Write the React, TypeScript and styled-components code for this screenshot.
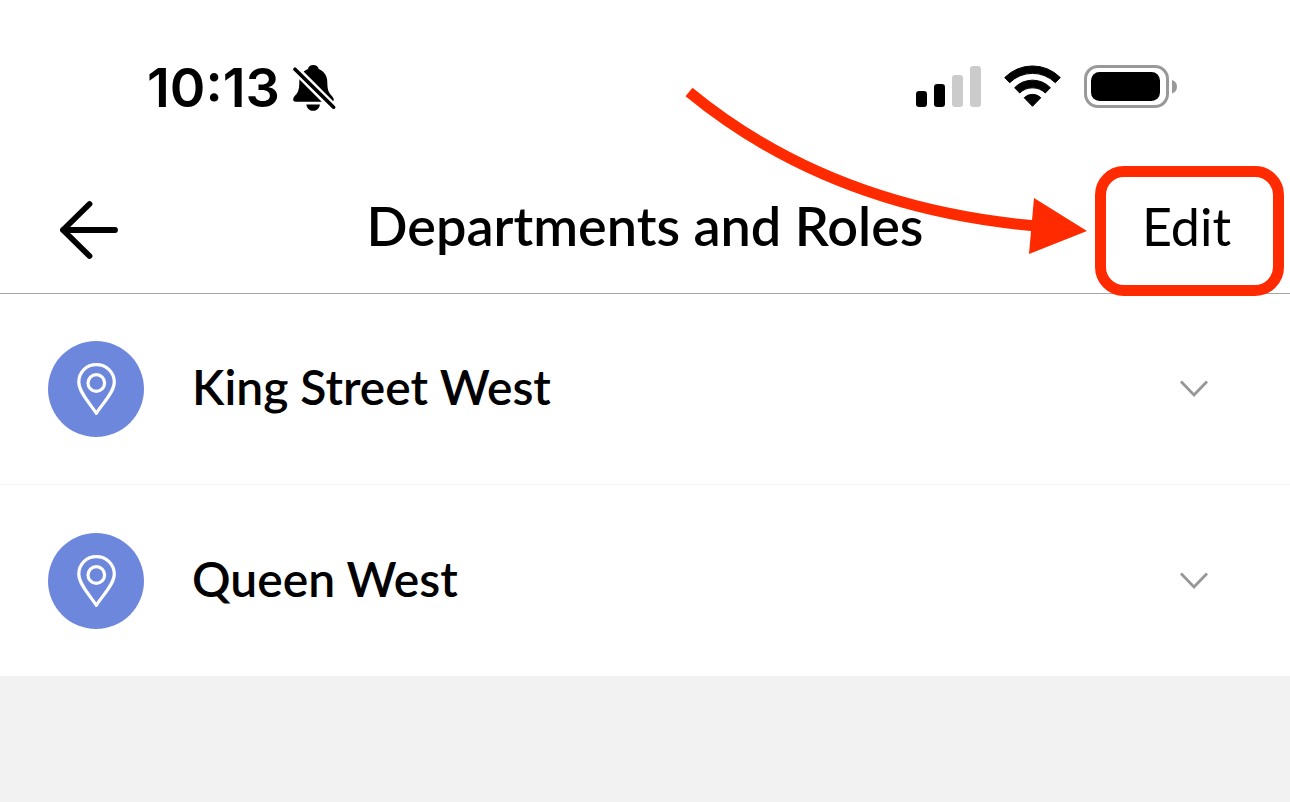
import React from "react";
import styled, { createGlobalStyle } from "styled-components";

const GlobalStyle = createGlobalStyle`
  *, *::before, *::after { box-sizing: border-box; }
  body {
    margin: 0;
    background: #f2f2f2;
    color: #000;
    font-family: Lato, "Open Sans", sans-serif;
    -webkit-font-smoothing: antialiased;
    overflow-x: hidden;
  }
  button {
    margin: 0;
    padding: 0;
    border: 0;
    background: none;
    color: inherit;
    font: inherit;
    cursor: pointer;
  }
  svg { display: block; flex: none; }
`;

const Header = styled.header`
  position: relative;
  z-index: 1;
  background: #fff;
  box-shadow: 0 1px 0 #a6a6a6;
`;

const StatusBar = styled.div`
  display: flex;
  align-items: center;
  justify-content: space-between;
  padding: 56px 112px 46px 147px;
  line-height: 64px;
`;

const StatusGroup = styled.div<{ $gap: number; $lift?: number }>`
  display: flex;
  align-items: center;
  gap: ${(p) => p.$gap}px;
  padding-bottom: ${(p) => p.$lift ?? 0}px;
`;

const Time = styled.time`
  font-family: Inter, sans-serif;
  font-size: 54px;
  font-weight: 600;
`;

const NavBar = styled.nav`
  display: grid;
  grid-template-columns: 1fr auto 1fr;
  align-items: center;
  height: 127px;
  padding: 0 6px;
`;

const BackButton = styled.button`
  justify-self: start;
  margin-left: 53px;
`;

const Title = styled.h1`
  margin: 0;
  padding-bottom: 8px;
  font-size: 54px;
  line-height: 64px;
  font-weight: 600;
  white-space: nowrap;
`;

const EditSlot = styled.div`
  position: relative;
  justify-self: end;
  align-self: stretch;
  display: flex;
`;

const EditButton = styled.button`
  min-width: 189px;
  padding: 0 6px 8px 0;
  font-size: 52px;
  line-height: 64px;
`;

const Highlight = styled.div`
  position: absolute;
  inset: 0 0 -3px;
  border: 11px solid #ff2a00;
  border-radius: 29px;
  pointer-events: none;
`;

const PointerArrow = styled.svg`
  position: absolute;
  right: 195px;
  bottom: 36px;
  pointer-events: none;
`;

const List = styled.ul`
  margin: 0;
  padding: 0;
  list-style: none;
  background: #fff;
`;

const Item = styled.li`
  &:not(:last-child) { border-bottom: 1px solid #f2f2f2; }
`;

const Row = styled.button`
  display: flex;
  align-items: center;
  gap: 48px;
  width: 100%;
  padding: 48px 82px 47px 48px;
  text-align: left;
`;

const Badge = styled.span`
  flex: none;
  width: 96px;
  height: 96px;
  border-radius: 50%;
  background: #6d87dc;
`;

const Label = styled.span`
  flex: 1;
  padding-bottom: 4px;
  font-size: 48px;
  line-height: 56px;
  font-weight: 600;
`;

const BellOff = () => (
  <svg width="43" height="46" viewBox="0 0 43 46" aria-label="Silent mode">
    <path d="M20.3 0C23 0 25.3 1.6 25.7 4C31 6 34.3 11 34.3 17C34.3 27 36.5 28 39.3 31.5C41.8 34.5 41 36.7 38 36.7H2.8C-.3 36.7-.5 34 1.3 31.5C4.2 28 6.3 27 6.3 17C6.3 11 9.5 6 15 4C15.4 1.6 17.6 0 20.3 0Z" />
    <path d="M13.3 39.4H26.9C26.5 43 23.8 45.8 20.1 45.8S13.7 43 13.3 39.4Z" />
    <path d="M-2 0L44 46" stroke="#fff" strokeWidth="8.6" />
    <path d="M2 4.2L40.6 42.2" stroke="#000" strokeWidth="3.6" strokeLinecap="round" />
  </svg>
);

const Signal = () => (
  <svg width="65" height="41" viewBox="0 0 65 41" aria-label="Signal strength">
    <rect x="0" y="25" width="11" height="16" rx="3.2" />
    <rect x="18" y="18" width="11" height="23" rx="3.2" />
    <rect x="36" y="9" width="11" height="32" rx="3.2" fill="#cbcbcb" />
    <rect x="54" y="0" width="11" height="41" rx="3.2" fill="#cbcbcb" />
  </svg>
);

const Wifi = () => (
  <svg width="57" height="42" viewBox="0 0 57 42" stroke="#000" strokeLinejoin="round" aria-label="Wi-Fi">
    <path d="M.7 12.6A39 39 0 0 1 56.3 12.6L51.3 17.7A32.5 32.5 0 0 0 5.7 17.7Z" />
    <path d="M10.6 22.7A25 25 0 0 1 46.4 22.7L41.3 28A18.5 18.5 0 0 0 15.7 28Z" />
    <path d="M20.2 32.7A12 12 0 0 1 36.8 32.7L28.5 41.3Z" />
  </svg>
);

const Battery = () => (
  <svg width="94" height="43" viewBox="0 0 94 43" aria-label="Battery">
    <rect x="1.5" y="1.5" width="82" height="40" rx="12.5" fill="none" stroke="#999" strokeWidth="3" />
    <rect x="7" y="7" width="69" height="29" rx="8.5" />
    <path d="M88 15C91.3 16 93 18.5 93 21.7S91.3 27.5 88 28.5Z" fill="#999" />
  </svg>
);

const BackArrow = () => (
  <svg width="60" height="60" viewBox="0 0 60 60" fill="none" stroke="#000" strokeWidth="5.8" strokeLinecap="round" strokeLinejoin="round">
    <path d="M56 30H4M30.5 4L4 30L30.5 56" />
  </svg>
);

const Pin = () => (
  <svg width="96" height="96" viewBox="0 0 96 96" fill="none" stroke="#fff" strokeWidth="3.2" strokeLinejoin="round">
    <path d="M48.3 72.3C42 62.5 30.8 51 30.8 41.2C30.8 31 38.5 23.7 48.3 23.7S66.3 31 66.3 41.2C66.3 51 54.6 62.5 48.3 72.3Z" />
    <circle cx="48.3" cy="42" r="8.3" />
  </svg>
);

const Chevron = () => (
  <svg width="28" height="18" viewBox="0 0 28 18" fill="none" stroke="#979797" strokeWidth="2.8">
    <path d="M1 1.5L14 15L27 1.5" />
  </svg>
);

const locations = ["King Street West", "Queen West"];

export default function App() {
  return (
    <>
      <GlobalStyle />
      <Header>
        <StatusBar>
          <StatusGroup $gap={13}>
            <Time>10:13</Time>
            <BellOff />
          </StatusGroup>
          <StatusGroup $gap={23} $lift={4}>
            <Signal />
            <Wifi />
            <Battery />
          </StatusGroup>
        </StatusBar>
        <NavBar>
          <BackButton type="button" aria-label="Back">
            <BackArrow />
          </BackButton>
          <Title>Departments and Roles</Title>
          <EditSlot>
            <EditButton type="button">Edit</EditButton>
            <Highlight />
            <PointerArrow width="406" height="170" viewBox="683 87 406 170" aria-hidden="true">
              <path d="M689 92Q830 208 1036 226" fill="none" stroke="#ff2a00" strokeWidth="11" />
              <path d="M1034 198L1087 231L1029 254Z" fill="#ff2a00" />
            </PointerArrow>
          </EditSlot>
        </NavBar>
      </Header>
      <main>
        <List>
          {locations.map((name) => (
            <Item key={name}>
              <Row type="button" aria-expanded={false}>
                <Badge>
                  <Pin />
                </Badge>
                <Label>{name}</Label>
                <Chevron />
              </Row>
            </Item>
          ))}
        </List>
      </main>
    </>
  );
}
